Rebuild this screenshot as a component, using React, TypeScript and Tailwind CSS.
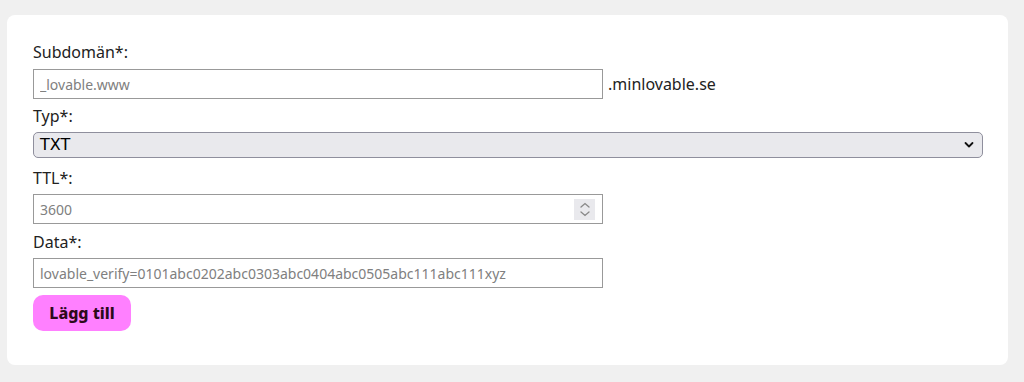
import React from "react";

const labelFont = { fontFamily: '"Noto Sans", "Open Sans", sans-serif' };

function Label({ children, className = "" }: { children: React.ReactNode; className?: string }) {
  return (
    <label className={`block text-[16px] leading-[24px] text-[#222] ${className}`} style={labelFont}>
      {children}
    </label>
  );
}

export default function App() {
  return (
    <div className="min-h-[382px] w-[1024px] bg-[#f0f0f0] pt-[15px] pl-[7px] pr-[16px] pb-[17px]" style={labelFont}>
      <div className="bg-white rounded-[8px] w-[1001px] h-[350px] pl-[26px] pr-[25px] pt-[25px]">
        <Label>Subdomän*:</Label>
        <div className="mt-[5px] flex items-center">
          <input
            readOnly
            placeholder="_lovable.www"
            className="w-[570px] h-[30px] border border-[#999] px-[6px] text-[14px] text-[#222] placeholder:text-[#808080] outline-none"
            style={{ fontFamily: '"Noto Sans", sans-serif' }}
          />
          <span className="ml-[5px] text-[16px] text-[#222]">.minlovable.se</span>
        </div>
        <Label className="mt-[5px]">Typ*:</Label>
        <div className="mt-[4px] relative w-[950px] h-[26px] rounded-[5px] border border-[#8f8f9d] bg-[#e9e9ed] flex items-center pl-[6px]">
          <span className="text-[16px] text-black" style={{ fontFamily: '"DejaVu Sans", sans-serif' }}>TXT</span>
          <svg className="absolute right-[8px] top-[8px]" width="10" height="8" viewBox="0 0 10 8">
            <path d="M1.5 2 L5 5.5 L8.5 2" fill="none" stroke="#111" strokeWidth="1.8" strokeLinecap="round" strokeLinejoin="round" />
          </svg>
        </div>
        <Label className="mt-[8px]">TTL*:</Label>
        <div className="mt-[4px] relative w-[570px] h-[30px] border border-[#999] flex items-center px-[6px]">
          <span className="text-[14px] text-[#808080]">3600</span>
          <div className="absolute right-[7px] top-[4px] w-[21px] h-[21px] bg-[#e9e9ed] flex flex-col items-center justify-center gap-[3px]">
            <svg width="12" height="6" viewBox="0 0 12 6">
              <path d="M2 5 L6 1.5 L10 5" fill="none" stroke="#888" strokeWidth="1.3" strokeLinecap="round" />
            </svg>
            <svg width="12" height="6" viewBox="0 0 12 6">
              <path d="M2 1 L6 4.5 L10 1" fill="none" stroke="#888" strokeWidth="1.3" strokeLinecap="round" />
            </svg>
          </div>
        </div>
        <Label className="mt-[6px]">Data*:</Label>
        <div className="mt-[4px] w-[570px] h-[30px] border border-[#999] flex items-center px-[6px]">
          <span className="text-[14px] text-[#808080]">lovable_verify=0101abc0202abc0303abc0404abc0505abc111abc111xyz</span>
        </div>
        <button className="mt-[7px] w-[98px] h-[36px] rounded-[10px] bg-[#ff80ff] text-[16px] font-extrabold text-[#2d0a1a]" style={labelFont}>
          Lägg till
        </button>
      </div>
    </div>
  );
}
